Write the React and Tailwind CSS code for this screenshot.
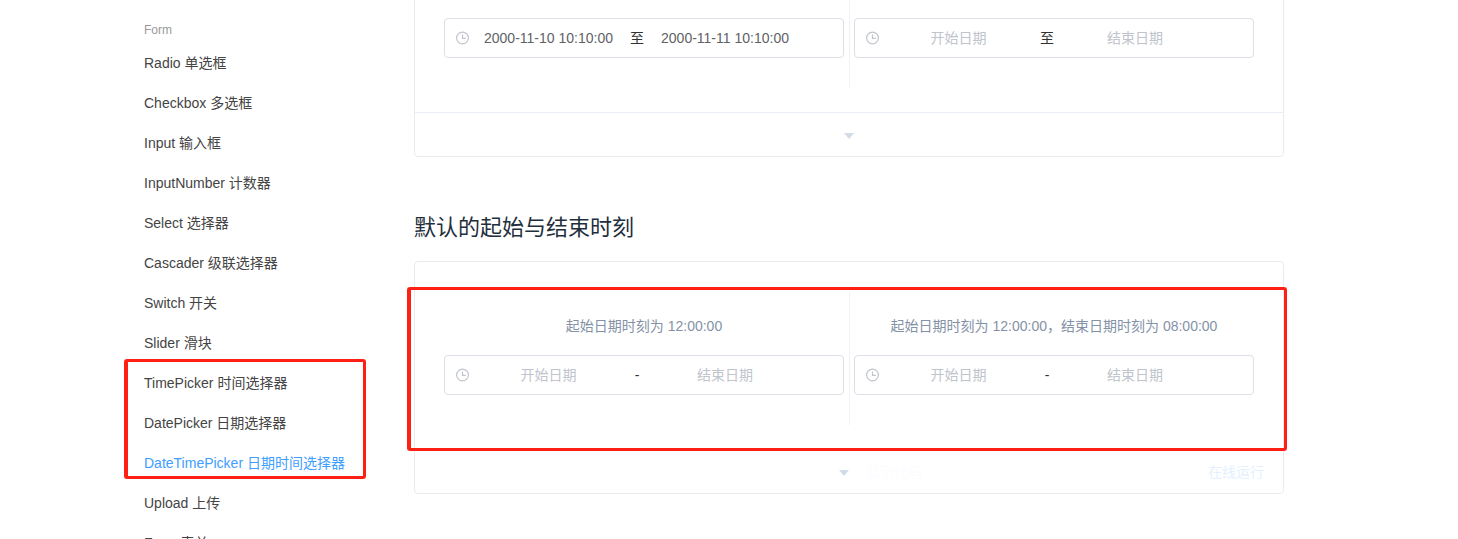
import React from "react";

const FONT = "font-['Liberation_Sans','Noto_Sans_CJK_SC',sans-serif]";

const items = [
  "Radio 单选框",
  "Checkbox 多选框",
  "Input 输入框",
  "InputNumber 计数器",
  "Select 选择器",
  "Cascader 级联选择器",
  "Switch 开关",
  "Slider 滑块",
  "TimePicker 时间选择器",
  "DatePicker 日期选择器",
  "DateTimePicker 日期时间选择器",
  "Upload 上传",
  "Form 表单",
];

function Clock() {
  return (
    <svg width="14" height="14" viewBox="0 0 14 14" fill="none" stroke="#c0c4cc" strokeWidth="1.2" className="shrink-0">
      <circle cx="6.5" cy="7" r="5.9" />
      <path d="M6.5 3.4V7.4H9.8" />
    </svg>
  );
}

function Caret({ className }) {
  return (
    <svg width="10" height="6" viewBox="0 0 10 6" className={className}>
      <path d="M0 0H10L5 6Z" fill="#d3dce6" />
    </svg>
  );
}

function RangeInput({ start, end, sep, filled }) {
  const tone = filled ? "text-[#606266]" : "text-[#c0c4cc]";
  return (
    <div className="flex h-10 w-[400px] items-center rounded border border-[#dcdfe6] bg-white pl-[11px] text-sm">
      <Clock />
      <span className={`ml-[1px] w-[154px] pl-[1px] text-center ${tone}`}>{start}</span>
      <span className="w-[24px] text-center text-[#303133]">{sep}</span>
      <span className={`-ml-[1px] w-[154px] text-center ${tone}`}>{end}</span>
    </div>
  );
}

function Block({ label, className, start, end, sep, filled }) {
  return (
    <div className={`h-[133px] pt-[24px] ${className}`}>
      <div className="w-[400px]">
        <div className="mb-[9px] h-[30px] text-center text-sm leading-[20px] text-[#8492a6]">{label}</div>
        <RangeInput start={start} end={end} sep={sep} filled={filled} />
      </div>
    </div>
  );
}

function Card({ children, footer }) {
  return (
    <section className="w-[870px] rounded border border-[#ebebeb]">
      <div className="pt-[30px] pb-[24px]">
        <div className="flex">{children}</div>
      </div>
      {footer}
    </section>
  );
}

export default function App() {
  return (
    <div className={`relative flex h-[539px] w-[1458px] overflow-hidden bg-white ${FONT}`}>
      <aside className="ml-[144px] w-[270px] shrink-0">
        <div className="h-[43px] pt-[22px] text-xs leading-[16px] text-[#999]">Form</div>
        <ul>
          {items.map((t) => (
            <li
              key={t}
              className={`h-10 text-sm leading-10 ${t.startsWith("DateTime") ? "text-[#409eff]" : "text-[#444]"}`}
            >
              {t}
            </li>
          ))}
        </ul>
      </aside>

      <main className="-mt-[76px] w-[870px] shrink-0">
        <Card
          footer={
            <div className="flex h-[44px] items-center justify-center border-t border-[#eaeefb]">
              <Caret className="mt-[2px]" />
            </div>
          }
        >
          <Block
            className="w-[435px] border-r border-[#eff2f6] pl-[29px]"
            start="2000-11-10 10:10:00"
            end="2000-11-11 10:10:00"
            sep="至"
            filled
          />
          <Block className="flex-1 pl-[4px]" start="开始日期" end="结束日期" sep="至" />
        </Card>

        <h3 className="mt-[56px] mb-[18px] h-[30px] text-[22px] leading-[30px] font-normal text-[#1f2f3d]">
          默认的起始与结束时刻
        </h3>

        <Card
          footer={
            <div className="flex h-[44px] items-center border-t border-[#eaeefb] pl-[424px] pr-[19px]">
              <Caret className="mt-[2px]" />
              <span className="ml-[17px] mt-[1px] text-sm leading-[16px] text-[#409eff] opacity-[0.02]">显示代码</span>
              <span className="ml-auto mt-[1px] text-sm leading-[16px] text-[#409eff] opacity-15">在线运行</span>
            </div>
          }
        >
          <Block
            className="w-[435px] border-r border-[#eff2f6] pl-[29px]"
            label="起始日期时刻为 12:00:00"
            start="开始日期"
            end="结束日期"
            sep="-"
          />
          <Block
            className="flex-1 pl-[4px]"
            label="起始日期时刻为 12:00:00，结束日期时刻为 08:00:00"
            start="开始日期"
            end="结束日期"
            sep="-"
          />
        </Card>
      </main>

      <div className="pointer-events-none absolute left-[124px] top-[359px] h-[120px] w-[242px] rounded-[3px] border-[3px] border-l-4 border-[#ff2015]" />
      <div className="pointer-events-none absolute left-[407px] top-[287px] h-[164px] w-[880px] rounded-[3px] border-[3px] border-l-4 border-[#ff2015]" />
    </div>
  );
}
